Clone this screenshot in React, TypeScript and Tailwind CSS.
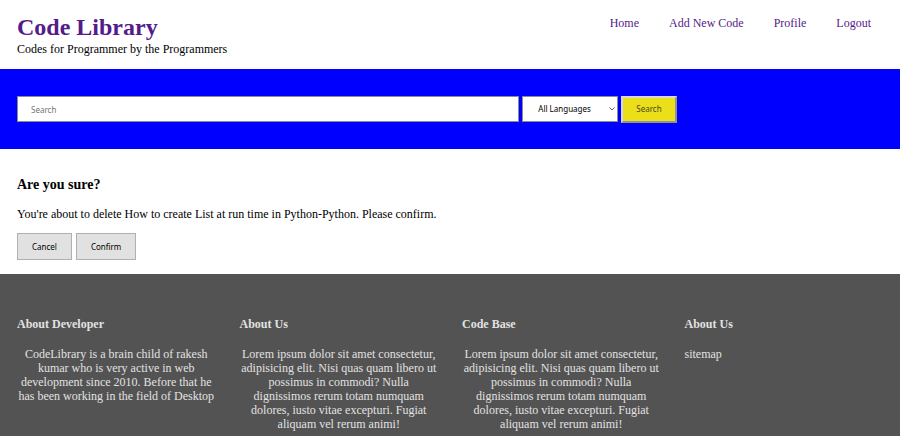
const navLinks = ["Home", "Add New Code", "Profile", "Logout"];

const lorem =
  "Lorem ipsum dolor sit amet consectetur, adipisicing elit. Nisi quas quam libero ut possimus in commodi? Nulla dignissimos rerum totam numquam dolores, iusto vitae excepturi. Fugiat aliquam vel rerum animi!";

const footerColumns = [
  {
    title: "About Developer",
    text: "CodeLibrary is a brain child of rakesh kumar who is very active in web development since 2010. Before that he has been working in the field of Desktop",
  },
  { title: "About Us", text: lorem },
  { title: "Code Base", text: lorem },
];

function Header() {
  return (
    <header className="flex items-start justify-between px-[17px] pt-3 pb-[13px]">
      <div>
        <h1 className="text-[24px] leading-[30px] font-bold text-[#551a8b]">
          <a href="#home">Code Library</a>
        </h1>
        <p>Codes for Programmer by the Programmers</p>
      </div>
      <nav className="flex gap-[30px] pt-1 pr-3 text-[#551a8b]">
        {navLinks.map((label) => (
          <a key={label} href="#">
            {label}
          </a>
        ))}
      </nav>
    </header>
  );
}

function SearchBar() {
  return (
    <form
      className="flex h-20 items-center gap-[3px] bg-[#0000ff] px-[17px] font-['Noto_Sans',sans-serif] text-[8px]"
      onSubmit={(e) => e.preventDefault()}
    >
      <input
        type="text"
        aria-label="Search"
        placeholder="Search"
        className="h-[26px] w-[58%] border border-[#8c8c8c] bg-white px-[13px] text-black placeholder:text-[#757575]"
      />
      <div className="relative">
        <select
          aria-label="Language"
          className="h-[26px] w-24 appearance-none border border-[#8c8c8c] bg-white pl-[15px] text-black"
        >
          <option>All Languages</option>
        </select>
        <svg
          className="pointer-events-none absolute top-[11px] right-[3px] h-1 w-[6px]"
          viewBox="0 0 6 4"
          fill="none"
          stroke="#666"
          aria-hidden="true"
        >
          <path d="M0.5 0.5 3 3 5.5 0.5" />
        </svg>
      </div>
      <button
        type="submit"
        className="h-[27px] border-2 border-t-[#d8d8d8] border-r-[#929292] border-b-[#929292] border-l-[#d8d8d8] bg-[#ebdf1b] px-[13px] text-[#4b4820]"
      >
        Search
      </button>
    </form>
  );
}

function ActionButton({ label }: { label: string }) {
  return (
    <button
      type="button"
      className="h-[27px] border border-[#b0b0b0] bg-[#e1e1e1] px-[14px] font-['Noto_Sans',sans-serif] text-[8px] text-black"
    >
      {label}
    </button>
  );
}

function Confirmation() {
  return (
    <main className="px-[17px] pt-7 pb-[14px]">
      <h2 className="text-[14px] leading-4 font-bold">Are you sure?</h2>
      <p className="mt-[14px]">
        You're about to delete How to create List at run time in Python-Python. Please confirm.
      </p>
      <div className="mt-3 flex gap-1">
        <ActionButton label="Cancel" />
        <ActionButton label="Confirm" />
      </div>
    </main>
  );
}

function Footer() {
  return (
    <footer className="grid grow grid-cols-4 gap-6 bg-[#535353] px-[17px] pt-[43px] text-[#e2e2e2]">
      {footerColumns.map(({ title, text }) => (
        <section key={title}>
          <h3 className="font-bold">{title}</h3>
          <p className="mt-4 text-center">{text}</p>
        </section>
      ))}
      <section>
        <h3 className="font-bold">About Us</h3>
        <a href="#sitemap" className="mt-4 block">
          sitemap
        </a>
      </section>
    </footer>
  );
}

export default function App() {
  return (
    <div className="flex min-h-screen flex-col bg-white font-['Liberation_Serif',serif] text-[12px] leading-[14px] text-black">
      <Header />
      <SearchBar />
      <Confirmation />
      <Footer />
    </div>
  );
}
